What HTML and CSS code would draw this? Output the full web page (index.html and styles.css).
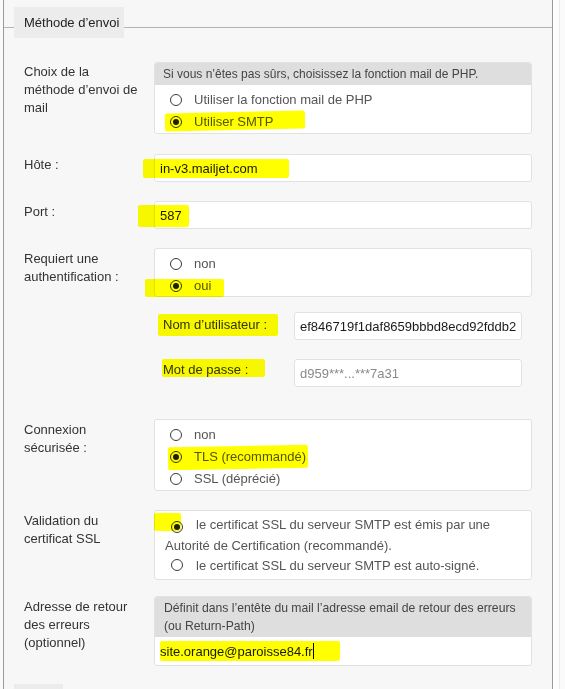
FILE: index.html
```html
<!DOCTYPE html>
<html lang="fr">
<head>
<meta charset="utf-8">
<title>Méthode d’envoi</title>
<link rel="stylesheet" href="styles.css">
</head>
<body>
<div class="page">
  <div class="panel">
    <section class="group">
      <div class="legend">Méthode d’envoi</div>

      <div class="row first">
        <div class="label">Choix de la<br>méthode d’envoi de<br>mail</div>
        <div class="box">
          <div class="box-head">Si vous n’êtes pas sûrs, choisissez la fonction mail de PHP.</div>
          <div class="choices">
            <div class="choice"><span class="radio"></span>Utiliser la fonction mail de PHP</div>
            <div class="choice"><span class="radio on"></span>Utiliser SMTP</div>
          </div>
        </div>
      </div>

      <div class="row r-host">
        <div class="label">Hôte :</div>
        <div class="input">in-v3.mailjet.com</div>
      </div>

      <div class="row">
        <div class="label">Port :</div>
        <div class="input">587</div>
      </div>

      <div class="row">
        <div class="label">Requiert une<br>authentification :</div>
        <div class="field">
          <div class="box">
            <div class="choices tight">
              <div class="choice"><span class="radio"></span>non</div>
              <div class="choice"><span class="radio on"></span>oui</div>
            </div>
          </div>
          <div class="sub first-sub">
            <div class="sub-label">Nom d’utilisateur :</div>
            <div class="input">ef846719f1daf8659bbbd8ecd92fddb2</div>
          </div>
          <div class="sub">
            <div class="sub-label">Mot de passe :</div>
            <div class="input muted">d959***...***7a31</div>
          </div>
        </div>
      </div>

      <div class="row r-conn">
        <div class="label">Connexion<br>sécurisée :</div>
        <div class="box">
          <div class="choices">
            <div class="choice"><span class="radio"></span>non</div>
            <div class="choice"><span class="radio on"></span>TLS (recommandé)</div>
            <div class="choice"><span class="radio"></span>SSL (déprécié)</div>
          </div>
        </div>
      </div>

      <div class="row">
        <div class="label">Validation du<br>certificat SSL</div>
        <div class="box">
          <div class="cert">
            <p><span class="radio inline on"></span>le certificat SSL du serveur SMTP est émis par une<br>Autorité de Certification (recommandé).</p>
            <p><span class="radio inline"></span>le certificat SSL du serveur SMTP est auto-signé.</p>
          </div>
        </div>
      </div>

      <div class="row r-addr">
        <div class="label">Adresse de retour<br>des erreurs<br>(optionnel)</div>
        <div class="box">
          <div class="box-head two">Définit dans l’entête du mail l’adresse email de retour des erreurs<br>(ou Return-Path)</div>
          <div class="box-input">site.orange@paroisse84.fr<span class="caret"></span></div>
        </div>
      </div>
    </section>
    <div class="legend next"></div>
  </div>

  <span class="hl" style="left:165px;top:112px;width:140px;height:18px;transform:rotate(-1.2deg)"></span>
  <span class="hl" style="left:143px;top:159px;width:146px;height:19px"></span>
  <span class="hl" style="left:138px;top:205px;width:51px;height:22px"></span>
  <span class="hl" style="left:145px;top:279px;width:79px;height:18px"></span>
  <span class="hl" style="left:158px;top:314px;width:120px;height:22px"></span>
  <span class="hl" style="left:162px;top:359px;width:103px;height:18px"></span>
  <span class="hl" style="left:168px;top:446px;width:140px;height:23px;transform:rotate(-1deg)"></span>
  <span class="hl" style="left:154px;top:513px;width:27px;height:18px"></span>
  <span class="hl" style="left:160px;top:641px;width:180px;height:20px"></span>
</div>
</body>
</html>
```

FILE: styles.css
```css
* { box-sizing: border-box; }

body {
  margin: 0;
  background: #fafafa;
  font-family: "Liberation Sans", Arial, sans-serif;
  font-size: 13px;
  color: #333;
}

.page {
  position: relative;
  height: 689px;
  overflow: hidden;
}

.panel {
  margin-left: 3px;
  width: 550px;
  min-height: 689px;
  border-left: 1px solid #9a9a9a;
  border-right: 1px solid #9a9a9a;
  background: #f7f7f7;
  box-shadow: 6px 0 0 #fdfdfd, 7px 0 0 #ebebeb;
  padding-top: 27px;
}

.group {
  border-top: 1px solid #b4b4b4;
  padding: 0 20px;
}

.legend {
  width: fit-content;
  margin: -21px 0 0 -10px;
  height: 31px;
  line-height: 32px;
  padding: 0 5px 0 10px;
  background: #ececec;
  color: #222;
}

.legend.next {
  width: 49px;
  margin: 18px 0 0 10px;
}

.row {
  display: grid;
  grid-template-columns: 130px 378px;
  align-items: start;
  margin-top: 19px;
}

.row.first { margin-top: 24px; }
.row.r-host { margin-top: 20px; }
.row.r-conn { margin-top: 32px; }
.row.r-addr { margin-top: 16px; }

.label {
  padding-top: 2px;
  line-height: 18px;
  color: #333;
}

.row.first .label { padding-top: 1px; }

.box {
  background: #fff;
  border: 1px solid #e2e2e2;
  border-radius: 3px;
  overflow: hidden;
}

.box-head {
  background: #dedede;
  padding: 3px 8px;
  line-height: 16px;
  font-size: 12px;
  color: #444;
}

.box-head.two {
  padding: 2px 9px 2px;
  line-height: 18px;
  font-size: 12.2px;
  white-space: nowrap;
}

.choices {
  padding: 3px 0 1px 15px;
}

.choices.tight { padding-bottom: 0; }

.choice {
  display: flex;
  align-items: center;
  height: 22px;
  padding-top: 1px;
  color: #555;
}

.radio {
  width: 12px;
  height: 12px;
  border: 1px solid #3a3a3a;
  border-radius: 50%;
  background: #fff;
  margin-right: 12px;
  flex: none;
  display: inline-flex;
  align-items: center;
  justify-content: center;
}

.radio.on::after {
  content: "";
  width: 6px;
  height: 6px;
  border-radius: 50%;
  background: #1e1e1e;
}

.radio.inline {
  vertical-align: -1px;
  margin: 0 13px 0 6px;
}

.input {
  height: 28px;
  line-height: 28px;
  padding: 0 5px;
  background: #fff;
  border: 1px solid #e2e2e2;
  border-radius: 3px;
  color: #1a1a1a;
  white-space: nowrap;
  overflow: hidden;
}

.input.muted { color: #8a8a8a; }

.sub {
  display: grid;
  grid-template-columns: 140px 228px;
  margin-top: 19px;
}

.sub.first-sub { margin-top: 15px; }

.sub-label {
  padding: 0 0 0 9px;
  line-height: 22px;
  color: #333;
}

.sub.first-sub .sub-label { padding-top: 2px; }

.cert {
  padding: 4px 10px 2px;
  color: #555;
}

.cert p {
  margin: 0;
  line-height: 20.5px;
}

.box-input {
  height: 28px;
  line-height: 30px;
  padding: 0 5px;
  color: #1a1a1a;
}

.caret {
  display: inline-block;
  width: 1px;
  height: 16px;
  background: #000;
  vertical-align: -3px;
}

.hl {
  position: absolute;
  background: #ffff00;
  mix-blend-mode: multiply;
  border-radius: 2px;
}
```
